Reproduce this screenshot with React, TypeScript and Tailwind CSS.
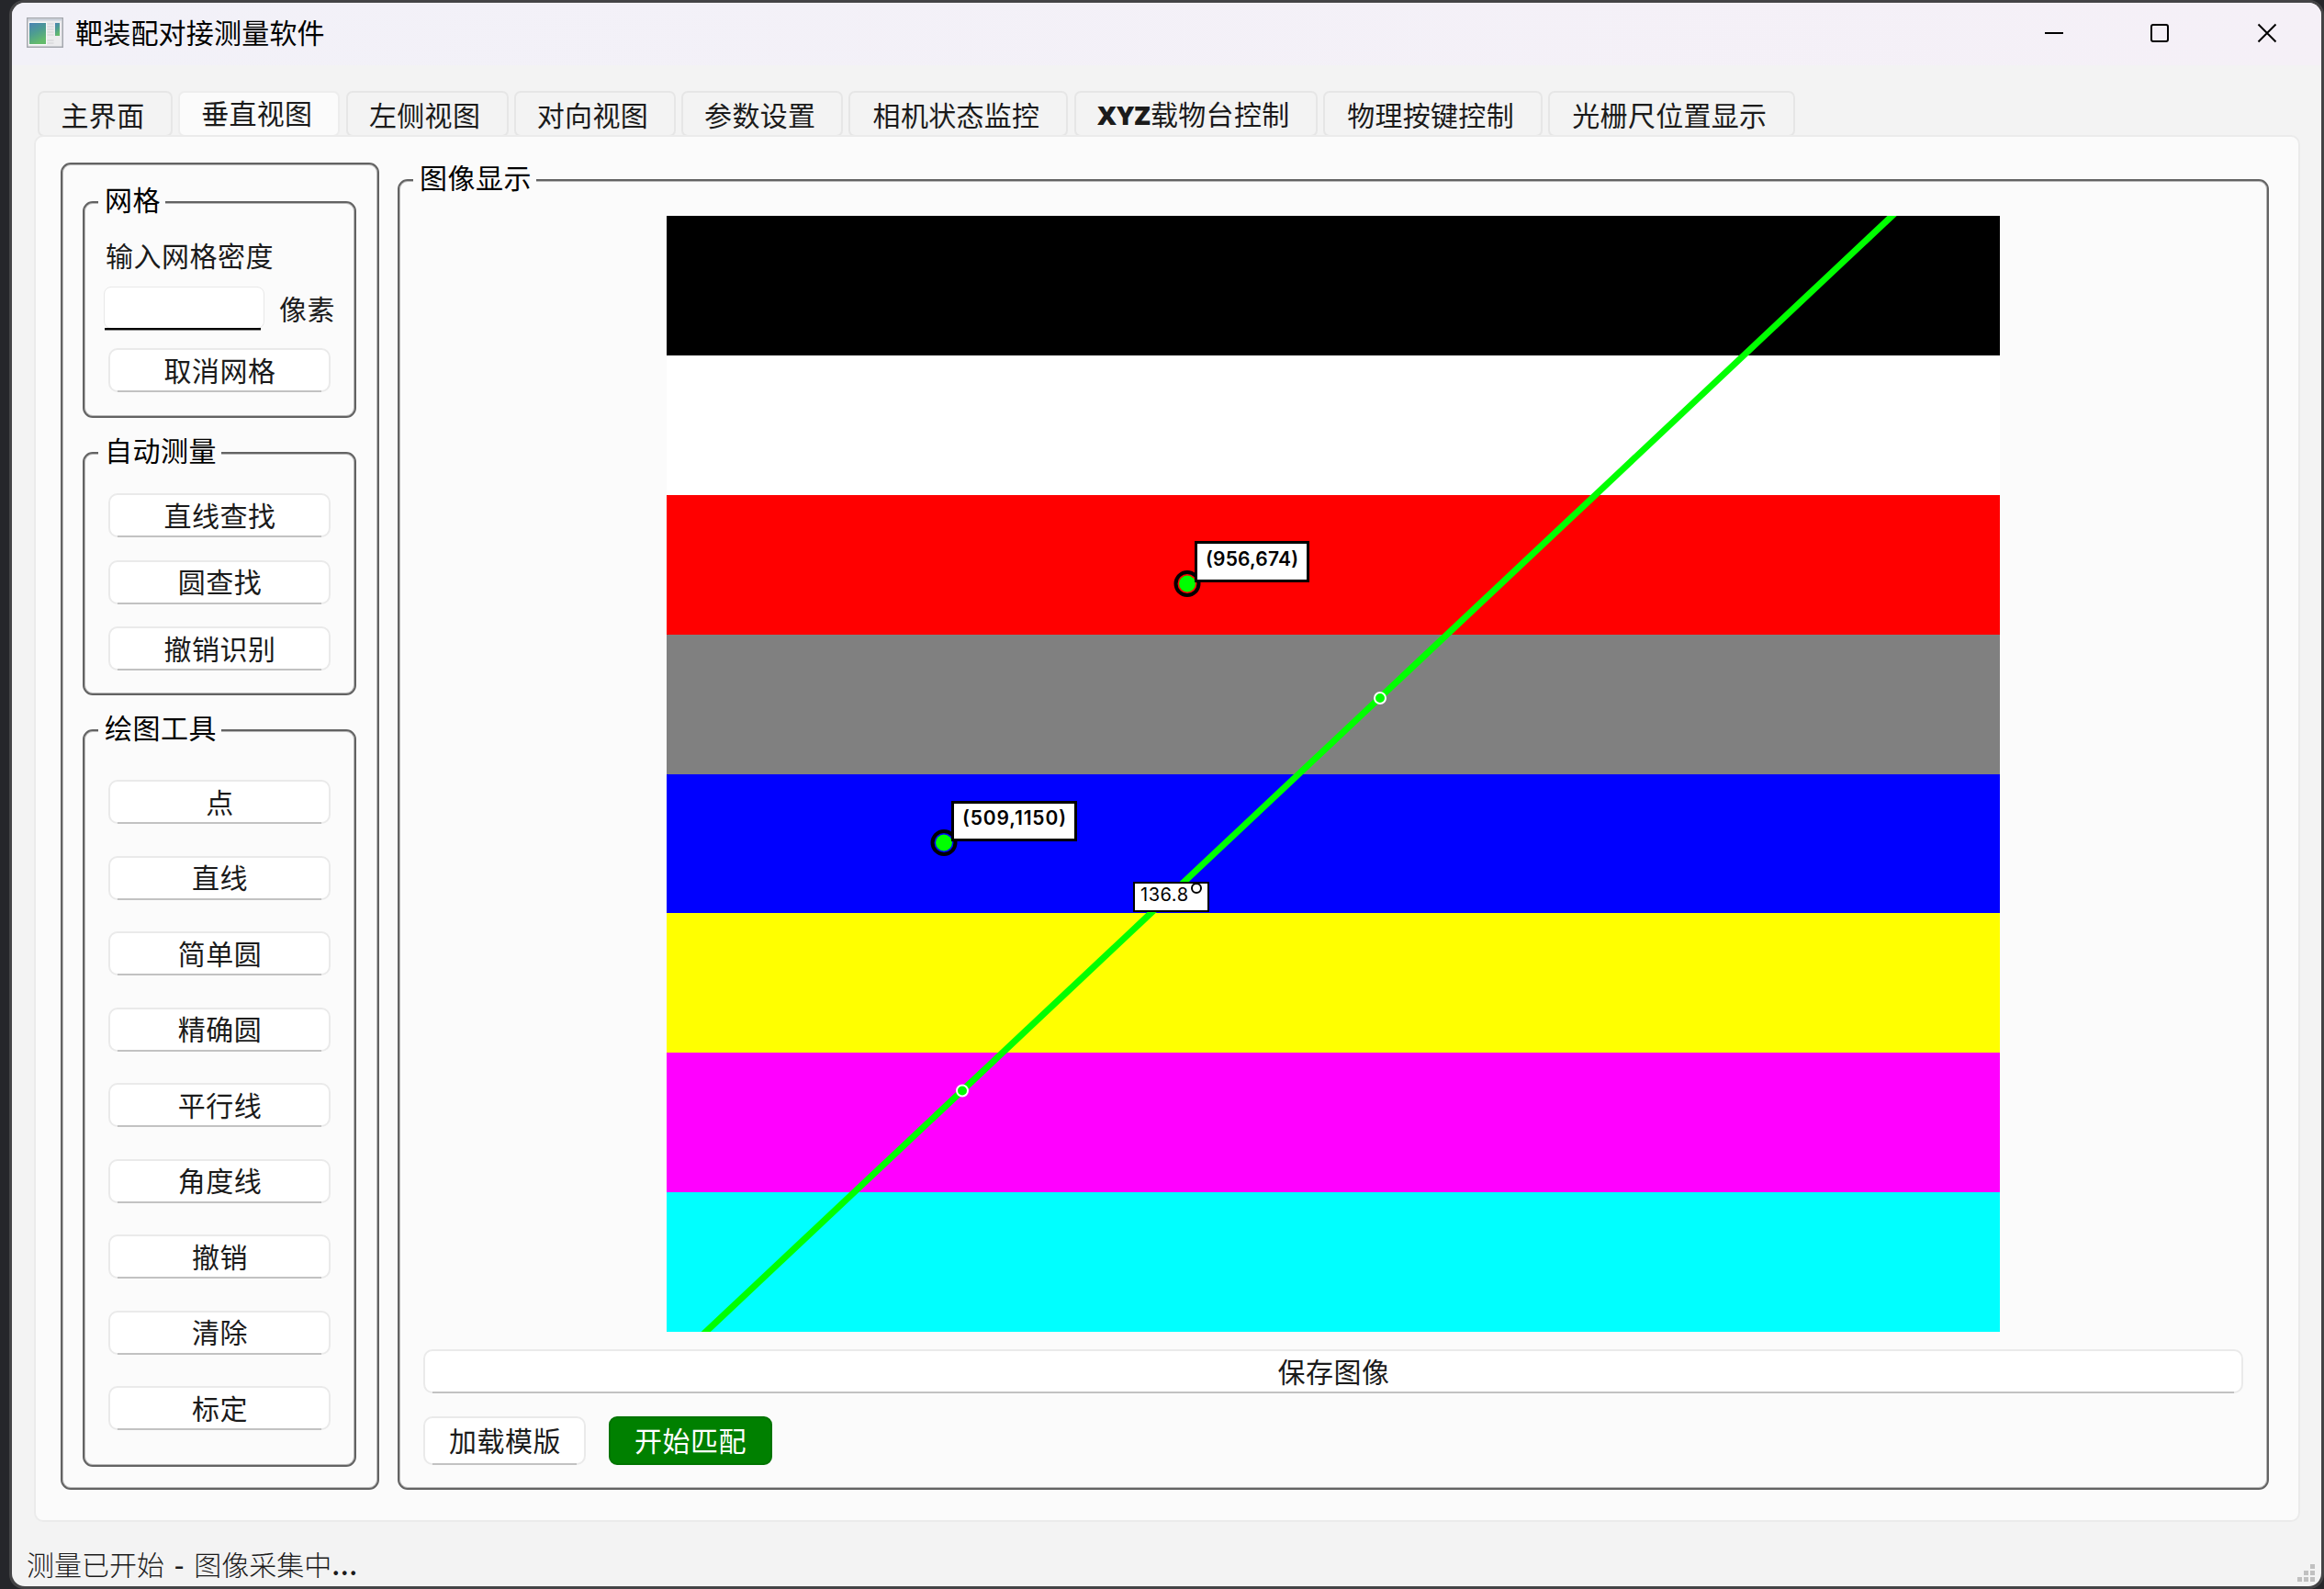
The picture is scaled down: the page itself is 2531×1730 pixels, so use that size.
import React from 'react';

type BoxProps = { className?: string; children?: React.ReactNode };

function Group({ title, className = '', children }: BoxProps & { title: string }) {
  return (
    <section className={`relative rounded-[11px] border-2 border-[#636363] shadow-[inset_0_0_0_1px_#b8b8b8] ${className}`}>
      <h2 className="absolute left-[15px] top-[-25px] h-[40px] whitespace-nowrap bg-[#fbfbfb] pl-[7px] pr-[5px] text-[30px] leading-[40px] tracking-[0.5px] text-black">
        {title}
      </h2>
      {children}
    </section>
  );
}

function PushButton({ className = '', children }: BoxProps) {
  return (
    <button className={`relative flex h-[48px] shrink-0 items-center justify-center rounded-[10px] border-2 border-[#eaeaea] bg-white pb-[3px] pl-[1px] text-[30px] leading-none tracking-[0.5px] text-[#1b1b1b] ${className}`}>
      {children}
      <span className="absolute -bottom-[2px] left-[8px] right-[8px] h-[2px] bg-[#c2c2c2]" />
    </button>
  );
}

const tabs = [
  { label: '主界面', width: 'w-[147px]' },
  { label: '垂直视图', width: 'w-[176px]', active: true },
  { label: '左侧视图', width: 'w-[177px]' },
  { label: '对向视图', width: 'w-[176px]' },
  { label: '参数设置', width: 'w-[176px]' },
  { label: '相机状态监控', width: 'w-[239px]' },
  { label: 'XYZ载物台控制', width: 'w-[265px]' },
  { label: '物理按键控制', width: 'w-[239px]' },
  { label: '光栅尺位置显示', width: 'w-[269px]' },
];

const bands = ['bg-black', 'bg-white', 'bg-[#ff0000]', 'bg-[#808080]', 'bg-[#0000ff]', 'bg-[#ffff00]', 'bg-[#ff00ff]', 'bg-[#00ffff]'];
const tools = ['点', '直线', '简单圆', '精确圆', '平行线', '角度线', '撤销', '清除', '标定'];

function AppIcon() {
  return (
    <svg className="h-[33px] w-[40px]" viewBox="0 0 40 33">
      <defs>
        <linearGradient id="pane" x1="0" y1="0" x2="0.4" y2="1">
          <stop offset="0" stopColor="#4b82b4" />
          <stop offset="0.5" stopColor="#4d9c92" />
          <stop offset="1" stopColor="#64bb6c" />
        </linearGradient>
      </defs>
      <rect x="0.75" y="0.75" width="38.5" height="31.5" fill="#ececee" stroke="#a5a8ae" strokeWidth="1.5" />
      <rect x="1.5" y="1.5" width="37" height="2" fill="#c9d0da" />
      <rect x="2" y="5" width="20" height="25" fill="#fafafa" />
      <rect x="3" y="6" width="18" height="23" fill="url(#pane)" />
      <rect x="31" y="6" width="5" height="14" fill="url(#pane)" />
      <path d="M22.500 7h7M22.500 10h7M22.500 13h7M22.500 16h7M22.500 19h7M22.500 25h7M22.500 28h7" stroke="#cfd0d3" strokeWidth="1" />
    </svg>
  );
}

export default function App() {
  return (
    <div className="h-[1730px] w-[2531px] overflow-hidden bg-[#25262a] pl-[10px] font-['Noto_Sans_CJK_SC',sans-serif]">
      <div className="h-[1730px] w-[2521px] rounded-[16px] bg-[#444446] pb-[3px] pl-[3px] pr-[3px] pt-[3px]">
        <main className="flex h-[1724px] flex-col overflow-hidden rounded-[14px] bg-[#f3f3f3]">
          <header className="flex h-[68px] shrink-0 bg-gradient-to-r from-[#f2f1f8] to-[#f5f0f7] pl-[16px]">
            <div className="mt-[16px]"><AppIcon /></div>
            <h1 className="ml-[13px] mt-[11px] text-[30px] leading-[40px] tracking-[0.2px] text-black">靶装配对接测量软件</h1>
            <svg className="ml-auto mr-[48px] mt-[22px] h-[22px] w-[254px]" viewBox="0 0 254 22" fill="none" stroke="#000" strokeWidth="2">
              <path d="M1 11h20" />
              <rect x="117" y="2" width="18" height="18" rx="2" />
              <path d="M233.500 1.500l19 19M252.500 1.500l-19 19" />
            </svg>
          </header>

          <nav className="ml-[28px] mt-[28px] flex h-[50px] shrink-0 gap-[6.300px]">
            {tabs.map((t) => (
              <div
                key={t.label}
                className={`flex shrink-0 items-center justify-center rounded-[7px] border-2 pr-[5px] text-[30px] leading-none tracking-[0.3px] text-[#1b1b1b] ${t.width} ${
                  t.active ? 'border-[#ededed] bg-[#fbfbfb] pb-[5px]' : 'border-[#e6e6e6] bg-[#f3f3f3] pb-[1px]'
                }`}
              >
                {t.label.startsWith('XYZ') ? (
                  <span><b className="font-['Open_Sans'] text-[29px] font-extrabold leading-none tracking-[0px]">XYZ</b>{t.label.slice(3)}</span>
                ) : (
                  t.label
                )}
              </div>
            ))}
          </nav>

          <div className="-mt-[2px] ml-[24px] flex h-[1510px] w-[2468px] shrink-0 rounded-[10px] border-2 border-[#ebebeb] bg-[#fbfbfb] pl-[27px]">
            <aside className="mt-[28px] h-[1445px] w-[347px] rounded-[11px] border-2 border-[#636363] pl-[22px] shadow-[inset_0_0_0_1px_#b8b8b8]">
              <Group title="网格" className="mt-[40px] h-[236px] w-[298px]">
                <p className="ml-[23px] mt-[36px] text-[30px] leading-[40px] tracking-[0.5px] text-[#1b1b1b]">输入网格密度</p>
                <div className="ml-[21px] mt-[15px] flex h-[48px] w-[260px]">
                  <div className="relative h-[48px] w-[175px]">
                    <input className="h-[46px] w-[175px] rounded-[8px] border border-[#e8e8e8] bg-white" />
                    <span className="absolute bottom-0 left-[1px] h-[3px] w-[170px] border-b border-[#8a8a8a] bg-black" />
                  </div>
                  <span className="ml-[16px] mt-[3px] text-[30px] leading-[40px] tracking-[0.5px] text-[#1b1b1b]">像素</span>
                </div>
                <PushButton className="ml-[26px] mt-[19px] w-[242px]">取消网格</PushButton>
              </Group>
              <Group title="自动测量" className="mt-[37px] flex h-[265px] w-[298px] flex-col gap-[24.500px] pl-[26px] pt-[43px]">
                <PushButton className="w-[242px]">直线查找</PushButton>
                <PushButton className="w-[242px]">圆查找</PushButton>
                <PushButton className="w-[242px]">撤销识别</PushButton>
              </Group>
              <Group title="绘图工具" className="mt-[37px] flex h-[803px] w-[298px] flex-col gap-[34.500px] pl-[26px] pt-[53px]">
                {tools.map((t) => <PushButton key={t} className="w-[242px]">{t}</PushButton>)}
              </Group>
            </aside>

            <Group title="图像显示" className="ml-[20px] mt-[46px] h-[1427px] w-[2038px]">
              <div className="relative ml-[291px] mt-[38px] flex h-[1215px] w-[1452px] flex-col">
                {bands.map((b) => <div key={b} className={`flex-1 ${b}`} />)}
                <svg className="absolute inset-0 h-[1215px] w-[1452px]" viewBox="726 235 1452 1215">
                  <path d="M762.300 1456L2067 229" stroke="#00ff00" strokeWidth="7" />
                  <circle cx="1503" cy="760" r="6" fill="#00ff00" stroke="#fff" strokeWidth="2" />
                  <circle cx="1048" cy="1187.500" r="6" fill="#00ff00" stroke="#fff" strokeWidth="2" />
                  <circle cx="1293" cy="635.500" r="12.500" fill="#f00" stroke="#000" strokeWidth="4" />
                  <circle cx="1293" cy="635.500" r="9" fill="#00ff00" />
                  <circle cx="1028" cy="917.500" r="12.500" fill="#00f" stroke="#000" strokeWidth="4" />
                  <circle cx="1028" cy="917.500" r="9" fill="#00ff00" />
                  <g fill="#fff" stroke="#000">
                    <rect x="1302.500" y="590.500" width="122" height="42" strokeWidth="3" />
                    <rect x="1037.500" y="873.500" width="134" height="41" strokeWidth="3" />
                    <rect x="1235" y="961" width="81" height="31" strokeWidth="2" />
                  </g>
                  <g className="font-['Inter',sans-serif]" fill="#000">
                    <text x="1313" y="616" fontSize="21" fontWeight="600" textLength="101">(956,674)</text>
                    <text x="1048" y="898" fontSize="21" fontWeight="600" textLength="113">(509,1150)</text>
                    <text x="1242" y="981" fontSize="20" fontWeight="400" textLength="52">136.8</text>
                  </g>
                  <circle cx="1303" cy="967" r="5" fill="none" stroke="#000" strokeWidth="2" />
                </svg>
              </div>
              <PushButton className="ml-[26px] mt-[19px] w-[1982px]">保存图像</PushButton>
              <div className="ml-[26px] mt-[25px] flex gap-[25px]">
                <PushButton className="h-[53px] w-[177px]">加载模版</PushButton>
                <button className="flex h-[53px] w-[178px] items-center justify-center rounded-[9px] border-2 border-[#007400] bg-[#008000] pb-[3px] text-[30px] leading-none tracking-[0.5px] text-white">开始匹配</button>
              </div>
            </Group>
          </div>

          <footer className="relative flex-1">
            <p className="ml-[16px] mt-[25px] whitespace-pre text-[30px] font-light leading-[40px] text-[#1b1b1b]">
              测量已开始<span className="font-medium [word-spacing:4px]"> - </span>图像采集中<span className="font-medium tracking-[0.6px]">...</span>
            </p>
            <svg className="absolute bottom-[5px] right-[7px] h-[19px] w-[19px]" viewBox="0 0 19 19" fill="#c0c0c0">
              <path d="M14 0h5v5h-5zM7 7h5v5h-5zM14 7h5v5h-5zM0 14h5v5h-5zM7 14h5v5h-5zM14 14h5v5h-5z" />
            </svg>
          </footer>
        </main>
      </div>
    </div>
  );
}
